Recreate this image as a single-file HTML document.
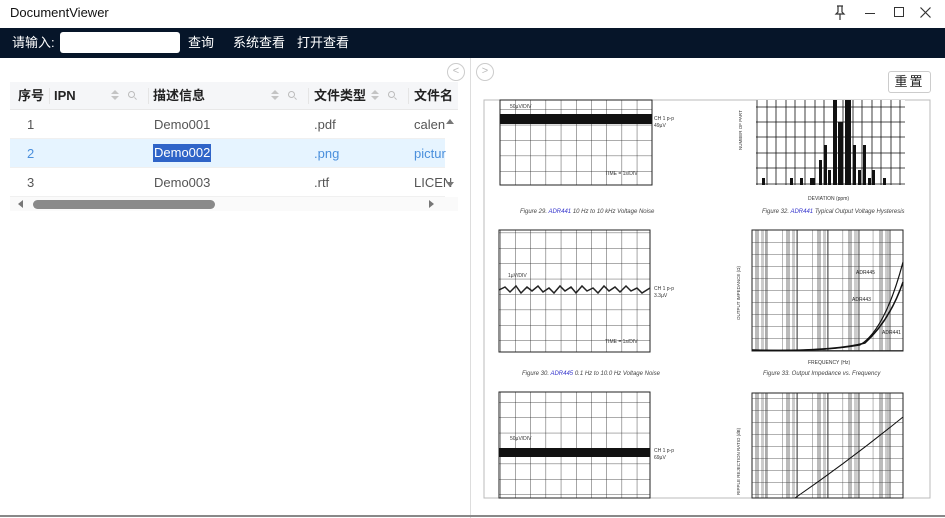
<!DOCTYPE html>
<html><head><meta charset="utf-8"><style>
*{margin:0;padding:0;box-sizing:border-box}
body{width:945px;height:518px;overflow:hidden;background:#fff;font-family:"Liberation Sans","Noto Sans CJK SC",sans-serif;font-size:13px;color:#333;position:relative}
.abs{position:absolute}
.title{left:10px;top:5px;font-size:13px;color:#111}
.nav{left:0;top:28px;width:945px;height:30px;background:#061529;color:#fff}
.nav span{position:absolute;top:0;line-height:30px;font-size:13px}
.inp{position:absolute;left:60px;top:4px;width:120px;height:21px;background:#fff;border-radius:3px}
.th{top:82px;left:10px;width:448px;height:28px;background:#f5f6f8;border-bottom:1px solid #e8e8e8}
.th span{position:absolute;top:0;line-height:28px;font-weight:bold;color:#222;font-size:13px}
.row{left:10px;width:435px;height:29px;border-bottom:1px solid #f0f0f0}
.row span{position:absolute;top:0;line-height:29px;font-size:13px;color:#555}
.sel{background:#e6f4ff}
.sel span{color:#4a8fdc}
.sort{position:absolute;top:8px;width:8px;height:12px}
.sort:before{content:"";position:absolute;left:0;top:0;border:4px solid transparent;border-bottom:4px solid #c4c4c4;border-top:0}
.sort:after{content:"";position:absolute;left:0;top:6px;border:4px solid transparent;border-top:4px solid #c4c4c4;border-bottom:0}
.mag{position:absolute;top:9px;width:7px;height:7px;border:1px solid #bbb;border-radius:50%}
.mag:after{content:"";position:absolute;left:5px;top:6px;width:3px;height:1px;background:#bbb;transform:rotate(45deg)}
.sep{position:absolute;top:6px;width:1px;height:16px;background:#e5e5e5}
</style></head><body>
<div class="abs title">DocumentViewer</div>
<svg class="abs" style="left:834px;top:5px" width="12" height="16"><path d="M3 1H9M4 1V7L2 9H10L8 7V1M6 9V15" stroke="#333" fill="none" stroke-width="1.2"/></svg>
<div class="abs" style="left:865px;top:13px;width:10px;height:1px;background:#333"></div>
<div class="abs" style="left:894px;top:7px;width:10px;height:10px;border:1px solid #333"></div>
<svg class="abs" style="left:920px;top:7px" width="11" height="11"><path d="M0.5 0.5L10.5 10.5M10.5 0.5L0.5 10.5" stroke="#333" stroke-width="1.2"/></svg>
<div class="abs nav"><span style="left:12px">请输入:</span><div class="inp"></div><span style="left:188px">查询</span><span style="left:233px">系统查看</span><span style="left:297px">打开查看</span></div>

<div class="abs" style="left:470px;top:58px;width:1px;height:460px;background:#ddd"></div>
<div class="abs" style="left:0;top:515px;width:945px;height:2px;background:#888"></div>
<div class="abs" style="left:447px;top:63px;width:18px;height:18px;border:1.5px solid #ccc;border-radius:50%;color:#bbb;font-size:11px;text-align:center;line-height:15px">&lt;</div>
<div class="abs" style="left:476px;top:63px;width:18px;height:18px;border:1.5px solid #ccc;border-radius:50%;color:#bbb;font-size:11px;text-align:center;line-height:15px">&gt;</div>

<div class="abs th"><span style="left:8px">序号</span><div class="sep" style="left:39px"></div><span style="left:44px">IPN</span><div class="sort" style="left:101px"></div><div class="mag" style="left:118px"></div><div class="sep" style="left:138px"></div><span style="left:143px">描述信息</span><div class="sort" style="left:261px"></div><div class="mag" style="left:278px"></div><div class="sep" style="left:298px"></div><span style="left:304px">文件类型</span><div class="sort" style="left:361px"></div><div class="mag" style="left:378px"></div><div class="sep" style="left:398px"></div><span style="left:404px">文件名</span></div>
<div class="abs row" style="top:110px"><span style="left:17px">1</span><span style="left:144px">Demo001</span><span style="left:304px">.pdf</span><span style="left:404px">calen</span></div>
<div class="abs row sel" style="top:139px"><span style="left:17px">2</span><span style="left:143px;top:5px;line-height:18px;background:#2f64c8;color:#fff;padding:0 1px">Demo002</span><span style="left:304px">.png</span><span style="left:404px">pictur</span></div>
<div class="abs row" style="top:168px"><span style="left:17px">3</span><span style="left:144px">Demo003</span><span style="left:304px">.rtf</span><span style="left:404px">LICEN</span></div>
<div class="abs" style="left:446px;top:119px;width:0;height:0;border:4px solid transparent;border-bottom:5px solid #777;border-top:0"></div>
<div class="abs" style="left:446px;top:182px;width:0;height:0;border:4px solid transparent;border-top:5px solid #777;border-bottom:0"></div>
<div class="abs" style="left:10px;top:197px;width:448px;height:14px;background:#fafafa"></div>
<div class="abs" style="left:18px;top:200px;width:0;height:0;border:4px solid transparent;border-right:5px solid #777;border-left:0"></div>
<div class="abs" style="left:429px;top:200px;width:0;height:0;border:4px solid transparent;border-left:5px solid #777;border-right:0"></div>
<div class="abs" style="left:33px;top:200px;width:182px;height:9px;background:#8a8a8a;border-radius:5px"></div>

<div class="abs" style="left:888px;top:71px;width:43px;height:22px;border:1px solid #ccc;border-radius:3px;font-size:13px;text-align:center;line-height:20px;letter-spacing:2px;color:#222">重置</div>

<svg class="abs" style="left:0;top:0" width="945" height="518">
<defs>
<pattern id="g1" x="500" y="94" width="15.2" height="15.4" patternUnits="userSpaceOnUse"><path d="M0 0V16M0 0H16" stroke="#222" stroke-width="0.8" fill="none"/></pattern>
<pattern id="g2" x="752" y="230" width="15.1" height="12" patternUnits="userSpaceOnUse"><path d="M0 0V12M0 0H16" stroke="#333" stroke-width="0.7" fill="none"/></pattern>
<pattern id="vb" x="752" y="0" width="31" height="10" patternUnits="userSpaceOnUse"><rect x="3" width="4" height="10" fill="#bbb"/><rect x="9" width="3" height="10" fill="#ccc"/><rect x="13" width="2" height="10" fill="#aaa"/></pattern>
</defs>
<rect x="484" y="100" width="446" height="398" fill="#fff" stroke="#bbb"/>
<rect x="500" y="100" width="152" height="85" fill="url(#g1)" stroke="#222"/>
<rect x="500" y="114" width="152" height="10" fill="#111"/>
<text x="510" y="108" font-size="5" fill="#333">50µV/DIV</text>
<text x="654" y="120" font-size="5" fill="#333">CH 1 p-p</text><text x="654" y="127" font-size="5" fill="#333">49µV</text>
<text x="605" y="175" font-size="5" fill="#333">TIME = 1s/DIV</text>
<text x="520" y="213" font-size="6" font-style="italic" fill="#444">Figure 29. <tspan fill="#33c">ADR441</tspan> 10 Hz to 10 kHz Voltage Noise</text>
<rect x="756" y="100" width="149" height="85" fill="#fff"/>
<g stroke="#111" stroke-width="0.8"><path d="M757 100V185M767 100V185M776 100V185M786 100V185M795 100V185M805 100V185M815 100V185M824 100V185M834 100V185M843 100V185M853 100V185M862 100V185M872 100V185M881 100V185M891 100V185M900 100V185"/><path d="M756 107H905M756 122H905M756 137H905M756 153H905M756 168H905M756 184H905"/></g>
<g fill="#111"><rect x="762" y="178" width="3" height="7"/><rect x="790" y="178" width="3" height="7"/><rect x="800" y="178" width="3" height="7"/><rect x="810" y="178" width="5" height="7"/><rect x="819" y="160" width="3" height="25"/><rect x="824" y="145" width="3" height="40"/><rect x="828" y="170" width="3" height="15"/><rect x="833" y="100" width="4" height="85"/><rect x="838" y="122" width="5" height="63"/><rect x="845" y="100" width="6" height="85"/><rect x="853" y="145" width="3" height="40"/><rect x="858" y="170" width="3" height="15"/><rect x="863" y="145" width="3" height="40"/><rect x="868" y="178" width="3" height="7"/><rect x="872" y="170" width="3" height="15"/><rect x="883" y="178" width="3" height="7"/></g>
<text x="742" y="150" font-size="4.5" fill="#333" transform="rotate(-90 742 150)">NUMBER OF PART</text>
<text x="808" y="200" font-size="5" fill="#333">DEVIATION (ppm)</text>
<text x="762" y="213" font-size="6" font-style="italic" fill="#444">Figure 32. <tspan fill="#33c">ADR441</tspan> Typical Output Voltage Hysteresis</text>
<rect x="499" y="230" width="151" height="122" fill="url(#g1)" stroke="#222"/>
<polyline points="499,290 505,287 510,292 516,286 521,293 527,287 532,291 538,286 543,292 549,288 554,293 560,286 565,291 571,287 576,293 582,286 587,291 593,288 598,293 604,286 609,291 615,287 620,292 626,286 631,291 637,288 642,293 650,288" fill="none" stroke="#222" stroke-width="1.5"/>
<text x="508" y="277" font-size="5" fill="#333">1µV/DIV</text>
<text x="654" y="290" font-size="5" fill="#333">CH 1 p-p</text><text x="654" y="297" font-size="5" fill="#333">3.3µV</text>
<text x="605" y="343" font-size="5" fill="#333">TIME = 1s/DIV</text>
<text x="522" y="375" font-size="6" font-style="italic" fill="#444">Figure 30. <tspan fill="#33c">ADR445</tspan> 0.1 Hz to 10.0 Hz Voltage Noise</text>
<rect x="752" y="230" width="151" height="121" fill="url(#vb)"/>
<rect x="752" y="230" width="151" height="121" fill="url(#g2)" stroke="#222"/>
<path d="M752 350 Q820 352 860 345 Q885 330 903 262" fill="none" stroke="#111" stroke-width="1.2"/>
<path d="M752 350 Q830 352 865 343 Q890 320 903 282" fill="none" stroke="#111" stroke-width="1.5"/>
<text x="856" y="274" font-size="5" fill="#222">ADR445</text><text x="852" y="301" font-size="5" fill="#222">ADR443</text><text x="882" y="334" font-size="5" fill="#222">ADR441</text>
<text x="740" y="320" font-size="4.5" fill="#333" transform="rotate(-90 740 320)">OUTPUT IMPEDANCE (Ω)</text>
<text x="808" y="364" font-size="5" fill="#333">FREQUENCY (Hz)</text>
<text x="763" y="375" font-size="6" font-style="italic" fill="#444">Figure 33. Output Impedance vs. Frequency</text>
<rect x="499" y="392" width="151" height="106" fill="url(#g1)" stroke="#222"/>
<rect x="499" y="448" width="151" height="9" fill="#111"/>
<text x="510" y="440" font-size="5" fill="#333">50µV/DIV</text>
<text x="654" y="452" font-size="5" fill="#333">CH 1 p-p</text><text x="654" y="459" font-size="5" fill="#333">69µV</text>
<rect x="752" y="393" width="151" height="105" fill="url(#vb)"/>
<rect x="752" y="393" width="151" height="105" fill="url(#g2)" stroke="#222"/>
<path d="M795 498 Q850 460 903 417" fill="none" stroke="#111" stroke-width="1"/>
<text x="740" y="495" font-size="4.5" fill="#333" transform="rotate(-90 740 495)">RIPPLE REJECTION RATIO (dB)</text>
</svg>
</body></html>
